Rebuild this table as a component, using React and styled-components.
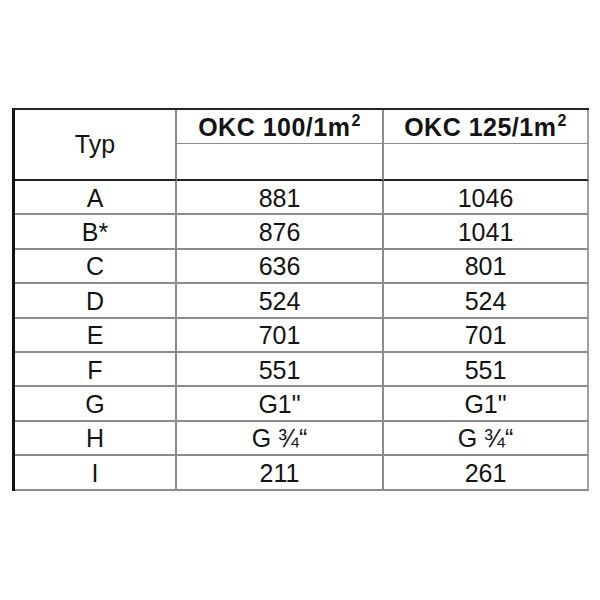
import React from "react";
import styled, { createGlobalStyle } from "styled-components";

const Global = createGlobalStyle`
  html, body { margin: 0; padding: 0; background: #fff; }
  body { font-family: "Liberation Sans", Arial, sans-serif; color: #141414; }
`;

const Page = styled.div`
  width: 600px;
  height: 600px;
  padding: 108px 0 0 12px;
  box-sizing: border-box;
  background: #fff;
`;

const Table = styled.table`
  border-collapse: separate;
  border-spacing: 0;
  table-layout: fixed;
  width: 577px;
  border-left: 3px solid #111;
  border-top: 2px solid #262626;
  font-size: 25px;
`;

const Cell = styled.td`
  box-sizing: border-box;
  padding: 2px 0 0;
  text-align: center;
  vertical-align: middle;
  line-height: 1;
  height: ${(p) => p.$h || 34.4}px;
  border-right: 2px solid ${(p) => (p.$last ? "#a0a0a0" : "#8c8c8c")};
  border-bottom: ${(p) =>
    p.$heavy ? "2px solid #222" : p.$thin ? "1.5px solid #8c8c8c" : "2px solid #8c8c8c"};
  font-weight: ${(p) => (p.$bold ? 700 : 400)};
  letter-spacing: ${(p) => (p.$bold ? "0.5px" : "0")};
  white-space: nowrap;
`;

const TypText = styled.span`
  display: inline-block;
  transform: translateY(-1px);
`;

const Sup = styled.span`
  font-size: 16px;
  vertical-align: 10px;
  line-height: 0;
  margin-left: 1px;
`;

const rows = [
  ["A", "881", "1046"],
  ["B*", "876", "1041"],
  ["C", "636", "801"],
  ["D", "524", "524"],
  ["E", "701", "701"],
  ["F", "551", "551"],
  ["G", 'G1"', 'G1"'],
  ["H", "G ¾“", "G ¾“"],
  ["I", "211", "261"],
];

export default function App() {
  return (
    <Page>
      <Global />
      <Table>
        <colgroup>
          <col style={{ width: 162 }} />
          <col style={{ width: 207 }} />
          <col style={{ width: 205 }} />
        </colgroup>
        <tbody>
          <tr>
            <Cell rowSpan={2} $heavy $h={34}>
              <TypText>Typ</TypText>
            </Cell>
            <Cell $bold $thin $h={34}>
              OKC 100/1m<Sup>2</Sup>
            </Cell>
            <Cell $bold $thin $last $h={34}>
              OKC 125/1m<Sup>2</Sup>
            </Cell>
          </tr>
          <tr>
            <Cell $heavy $h={37} />
            <Cell $heavy $last $h={37} />
          </tr>
          {rows.map(([t, a, b]) => (
            <tr key={t}>
              <Cell>{t}</Cell>
              <Cell>{a}</Cell>
              <Cell $last>{b}</Cell>
            </tr>
          ))}
        </tbody>
      </Table>
    </Page>
  );
}
